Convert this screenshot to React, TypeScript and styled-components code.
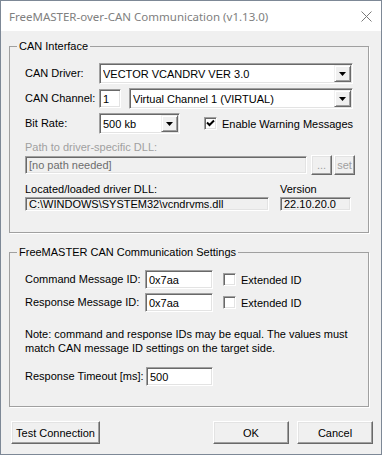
import React from 'react';
import styled, { createGlobalStyle } from 'styled-components';

const GlobalStyle = createGlobalStyle`
  html, body {
    margin: 0;
    padding: 0;
    background: #ffffff;
  }
  body {
    font-family: "Liberation Sans", Arial, sans-serif;
    font-size: 11px;
    color: #000;
  }
`;

const Window = styled.div`
  width: 382px;
  height: 455px;
  box-sizing: border-box;
  border: 1px solid #7d8896;
  display: flex;
  flex-direction: column;
  background: #f0f0f0;
`;

const TitleBar = styled.div`
  height: 30px;
  flex: none;
  background: #fff;
  display: flex;
  align-items: center;
  justify-content: space-between;
  padding-left: 8px;
  font-family: "Noto Sans", "Open Sans", sans-serif;
  font-size: 11.5px;
  color: #808080;
`;

const CloseBox = styled.div`
  width: 30px;
  height: 30px;
  display: flex;
  align-items: center;
  justify-content: center;
`;

const Body = styled.div`
  flex: 1;
  display: flex;
  flex-direction: column;
  padding: 9px 0 0 8px;
`;

const Group = styled.fieldset<{ $top?: number }>`
  margin: ${(p) => p.$top || 0}px 0 0 0;
  padding: 0;
  width: 360px;
  box-sizing: border-box;
  min-width: 0;
  border: 1px solid #a0a0a0;
  box-shadow: 1px 1px 0 #fff;
`;

const Legend = styled.legend`
  padding: 0 2px;
  margin-left: 7px;
  line-height: 13px;
`;

const GroupContent = styled.div<{ $pt: number; $pb: number }>`
  display: flex;
  flex-direction: column;
  padding: ${(p) => p.$pt}px 15px ${(p) => p.$pb}px 15px;
`;

const Row = styled.div<{ $h?: number; $mt?: number }>`
  display: flex;
  align-items: center;
  height: ${(p) => p.$h || 21}px;
  margin-top: ${(p) => p.$mt || 0}px;
`;

const Label = styled.div<{ $w?: number; $disabled?: boolean; $mt?: number }>`
  width: ${(p) => (p.$w ? `${p.$w}px` : 'auto')};
  flex: none;
  line-height: 13px;
  margin-top: ${(p) => p.$mt || 0}px;
  color: ${(p) => (p.$disabled ? '#a0a0a0' : '#000')};
  white-space: nowrap;
`;

const sunken = `
  border: 1px solid;
  border-color: #a0a0a0 #ffffff #ffffff #a0a0a0;
  box-shadow: inset 1px 1px 0 #696969, inset -1px -1px 0 #e3e3e3;
`;

const Edit = styled.div<{ $w?: number; $h?: number; $bg?: string; $color?: string }>`
  ${sunken}
  box-sizing: border-box;
  width: ${(p) => (p.$w ? `${p.$w}px` : 'auto')};
  flex: ${(p) => (p.$w ? 'none' : '1')};
  height: ${(p) => p.$h || 19}px;
  background: ${(p) => p.$bg || '#fff'};
  color: ${(p) => p.$color || '#000'};
  padding: 0 3px;
  display: flex;
  align-items: center;
  white-space: nowrap;
  overflow: hidden;
`;

const Combo = styled.div<{ $w?: number }>`
  ${sunken}
  box-sizing: border-box;
  width: ${(p) => (p.$w ? `${p.$w}px` : 'auto')};
  flex: ${(p) => (p.$w ? 'none' : '1')};
  height: 21px;
  background: #fff;
  display: flex;
  align-items: center;
  padding: 1px 1px 1px 3px;
`;

const ComboText = styled.div`
  flex: 1;
  white-space: nowrap;
  overflow: hidden;
`;

const DropButton = styled.div`
  width: 17px;
  height: 17px;
  box-sizing: border-box;
  background: #f0f0f0;
  border: 1px solid;
  border-color: #f0f0f0 #696969 #696969 #f0f0f0;
  box-shadow: inset 1px 1px 0 #fff, inset -1px -1px 0 #a0a0a0;
  display: flex;
  align-items: center;
  justify-content: center;
`;

const Button = styled.div<{ $w: number; $h?: number; $disabled?: boolean }>`
  width: ${(p) => p.$w}px;
  height: ${(p) => p.$h || 23}px;
  box-sizing: border-box;
  flex: none;
  background: #f0f0f0;
  border: 1px solid;
  border-color: #fff #696969 #696969 #fff;
  box-shadow: inset -1px -1px 0 #a0a0a0, inset 1px 1px 0 #e3e3e3;
  display: flex;
  align-items: center;
  justify-content: center;
  color: ${(p) => (p.$disabled ? '#a0a0a0' : '#000')};
`;

const CheckWrap = styled.div<{ $ml: number }>`
  display: flex;
  flex: none;
  align-items: center;
  margin-left: ${(p) => p.$ml}px;
  gap: 5px;
  white-space: nowrap;
`;

const CheckBox = styled.div`
  ${sunken}
  width: 13px;
  height: 13px;
  box-sizing: border-box;
  background: #fff;
  display: flex;
  align-items: center;
  justify-content: center;
`;

const Column = styled.div<{ $w: number; $ml?: number }>`
  display: flex;
  flex-direction: column;
  width: ${(p) => p.$w}px;
  margin-left: ${(p) => p.$ml || 0}px;
`;

const Note = styled.p`
  margin: 15px 0 0 0;
  line-height: 14px;
`;

const ButtonRow = styled.div`
  display: flex;
  margin-top: 14px;
  padding-left: 2px;
`;

const Spacer = styled.div`
  flex: 1;
`;

const ArrowIcon = () => (
  <svg width="7" height="4" viewBox="0 0 7 4">
    <path d="M0 0h7L3.5 4z" fill="#000" />
  </svg>
);

const Dropdown: React.FC<{ value: string; width?: number }> = ({ value, width }) => (
  <Combo $w={width}>
    <ComboText>{value}</ComboText>
    <DropButton>
      <ArrowIcon />
    </DropButton>
  </Combo>
);

const Check: React.FC<{ checked?: boolean; label: string; ml: number }> = ({ checked, label, ml }) => (
  <CheckWrap $ml={ml}>
    <CheckBox>
      {checked && (
        <svg width="9" height="9" viewBox="0 0 9 9">
          <path d="M1 3.5l2.5 2.5L8 1.5" stroke="#000" strokeWidth="2" fill="none" />
        </svg>
      )}
    </CheckBox>
    <span>{label}</span>
  </CheckWrap>
);

export default function App() {
  return (
    <>
      <GlobalStyle />
      <Window>
        <TitleBar>
          <span>FreeMASTER-over-CAN Communication (v1.13.0)</span>
          <CloseBox>
            <svg width="11" height="11" viewBox="0 0 11 11">
              <path d="M0.5 0.5l10 10M10.5 0.5l-10 10" stroke="#7a7a7a" strokeWidth="1" />
            </svg>
          </CloseBox>
        </TitleBar>
        <Body>
          <Group>
            <Legend>CAN Interface</Legend>
            <GroupContent $pt={10} $pb={15}>
              <Row>
                <Label $w={74}>CAN Driver:</Label>
                <Dropdown value="VECTOR VCANDRV VER 3.0" />
              </Row>
              <Row $mt={4}>
                <Label $w={74}>CAN Channel:</Label>
                <Edit $w={22} $h={19}>1</Edit>
                <Spacer style={{ flex: 'none', width: 8 }} />
                <Dropdown value="Virtual Channel 1 (VIRTUAL)" />
              </Row>
              <Row $mt={4}>
                <Label $w={74}>Bit Rate:</Label>
                <Dropdown value="500 kb" width={81} />
                <Check checked label="Enable Warning Messages" ml={24} />
              </Row>
              <Label $disabled $mt={7}>Path to driver-specific DLL:</Label>
              <Row $h={20} $mt={1}>
                <Edit $w={282} $h={18} $bg="#f0f0f0" $color="#6d6d6d">[no path needed]</Edit>
                <Button $w={21} $h={20} $disabled style={{ marginLeft: 4 }}>...</Button>
                <Button $w={21} $h={20} $disabled style={{ marginLeft: 2 }}>set</Button>
              </Row>
              <Row $h={34} $mt={8} style={{ alignItems: 'flex-start' }}>
                <Column $w={244}>
                  <Label>Located/loaded driver DLL:</Label>
                  <Edit $h={20} $bg="#f0f0f0" style={{ marginTop: 1 }}>C:\WINDOWS\SYSTEM32\vcndrvms.dll</Edit>
                </Column>
                <Column $w={71} $ml={11}>
                  <Label>Version</Label>
                  <Edit $h={20} $bg="#f0f0f0" style={{ marginTop: 1 }}>22.10.20.0</Edit>
                </Column>
              </Row>
            </GroupContent>
          </Group>

          <Group $top={13}>
            <Legend>FreeMASTER CAN Communication Settings</Legend>
            <GroupContent $pt={11} $pb={20}>
              <Row $h={19}>
                <Label $w={120}>Command Message ID:</Label>
                <Edit $w={68}>0x7aa</Edit>
                <Check label="Extended ID" ml={10} />
              </Row>
              <Row $h={19} $mt={4}>
                <Label $w={120}>Response Message ID:</Label>
                <Edit $w={68}>0x7aa</Edit>
                <Check label="Extended ID" ml={10} />
              </Row>
              <Note>
                Note: command and response IDs may be equal. The values must
                <br />
                match CAN message ID settings on the target side.
              </Note>
              <Row $h={19} $mt={12}>
                <Label $w={121}>Response Timeout [ms]:</Label>
                <Edit $w={67}>500</Edit>
              </Row>
            </GroupContent>
          </Group>

          <ButtonRow>
            <Button $w={89}>Test Connection</Button>
            <Spacer />
            <Button $w={76}>OK</Button>
            <Button $w={76} style={{ marginLeft: 8, marginRight: 8 }}>Cancel</Button>
          </ButtonRow>
        </Body>
      </Window>
    </>
  );
}
